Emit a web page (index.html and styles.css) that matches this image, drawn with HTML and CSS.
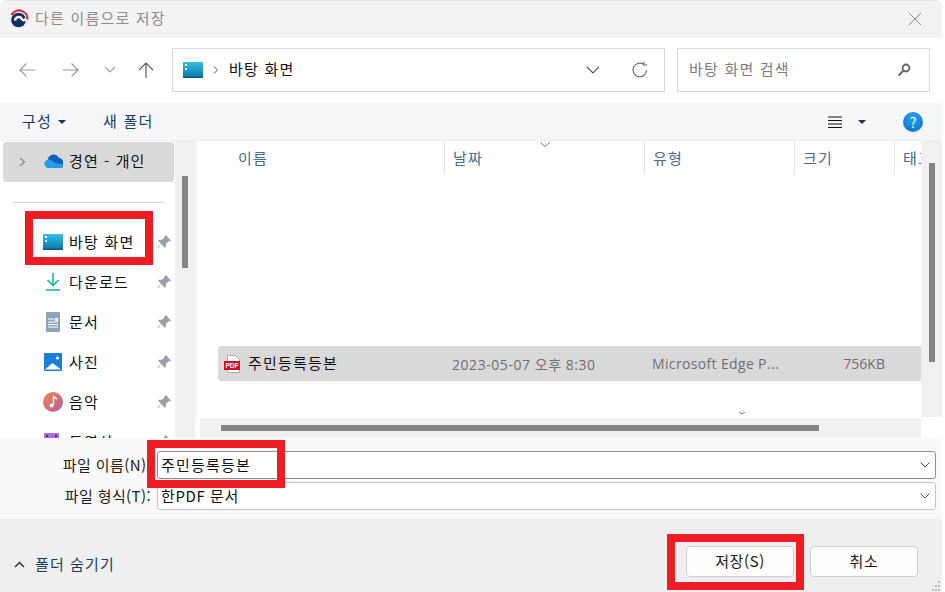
FILE: index.html
```html
<!DOCTYPE html>
<html lang="ko">
<head>
<meta charset="utf-8">
<title>다른 이름으로 저장</title>
<link rel="stylesheet" href="styles.css">
</head>
<body>
<div class="window">
  <header class="titlebar">
    <svg class="logo" width="20" height="20" viewBox="0 0 20 20"><circle cx="10" cy="10" r="10" fill="#eceef2"/><path d="M2.500 6A8.500 8.500 0 0 1 18.500 10.500" stroke="#d2283c" stroke-width="2.200" fill="none"/><circle cx="9.500" cy="11" r="7.300" fill="#12305f"/><path d="M6 11.500C6.500 7.500 11 7 12.500 9.500S15.500 12 16.500 9.500" stroke="#fff" stroke-width="2.400" fill="none"/></svg>
    <span class="title">다른 이름으로 저장</span>
    <svg class="close" width="14" height="14" viewBox="0 0 14 14"><path d="M1 1l12 12M13 1L1 13" stroke="#8a8a8a" fill="none"/></svg>
  </header>

  <nav class="navbar">
    <svg class="nav-back" width="16" height="16" viewBox="0 0 16 16"><path d="M16 8H1M7.500 1.500L1 8l6.500 6.500" stroke="#9a9a9a" stroke-width="1.200" fill="none"/></svg>
    <svg class="nav-fwd" width="16" height="16" viewBox="0 0 16 16"><path d="M0 8h15M8.500 1.500L15 8l-6.500 6.500" stroke="#9a9a9a" stroke-width="1.200" fill="none"/></svg>
    <svg class="nav-down" width="12" height="8" viewBox="0 0 12 8"><path d="M1 1l5 5 5-5" stroke="#a5a5a5" stroke-width="1.200" fill="none"/></svg>
    <svg class="nav-up" width="16" height="16" viewBox="0 0 16 16"><path d="M8 16V1M1 8l7-7 7 7" stroke="#5f5f5f" stroke-width="1.200" fill="none"/></svg>
    <div class="address">
      <svg width="20" height="16" viewBox="0 0 20 16"><use href="#desk"/></svg>
      <svg class="crumb" width="6" height="8" viewBox="0 0 6 8"><path d="M1 .5L4.500 4 1 7.500" stroke="#555" fill="none"/></svg>
      <span class="lift-2">바탕 화면</span>
      <svg class="addr-chev" width="14" height="8" viewBox="0 0 14 8"><path d="M1 1l6 6 6-6" stroke="#555" stroke-width="1.100" fill="none"/></svg>
      <svg class="refresh" width="18" height="18" viewBox="0 0 18 18"><path d="M15.500 9A6.800 6.800 0 1 1 12.500 3.300M12.800 .5v3.500H16.300" stroke="#6a6a6a" stroke-width="1.100" fill="none"/></svg>
    </div>
    <div class="search">
      <span class="lift-2">바탕 화면 검색</span>
      <svg width="14" height="14" viewBox="0 0 14 14"><circle cx="9" cy="5" r="3.500" fill="none" stroke="#666" stroke-width="1.800"/><path d="M6.500 7.500L1.500 12.500" stroke="#666" stroke-width="2"/></svg>
    </div>
  </nav>

  <div class="toolbar">
    <span class="tool-label lift">구성</span>
    <i class="caret"></i>
    <span class="tool-label new-folder lift">새 폴더</span>
    <div class="tool-right">
      <svg class="view" width="14" height="12" viewBox="0 0 14 12"><path d="M0 1h14M0 4.500h14M0 8h14M0 11.500h14" stroke="#111" fill="none"/></svg>
      <i class="caret"></i>
      <span class="help">?</span>
    </div>
  </div>

  <main class="main">
    <aside class="sidebar">
      <div class="side-item onedrive">
        <svg class="expander" width="7" height="10" viewBox="0 0 7 10"><path d="M1 1l4.500 4L1 9" stroke="#8a8a8a" stroke-width="1.200" fill="none"/></svg>
        <svg class="side-icon" width="20" height="14" viewBox="0 0 20 14"><path d="M5 6a5.500 5.500 0 0 1 10.500-2.200A4.500 4.500 0 0 1 19.800 10H5z" fill="#0b62b8"/><path d="M5 5.500A4.500 4.500 0 0 0 4 14h13.500a2.500 2.500 0 0 0 2.300-4.200L13 9.500 8.500 6.500A4.500 4.500 0 0 0 5 5.500z" fill="#2a9be8"/></svg>
        <span>경연 - 개인</span>
      </div>
      <div class="side-divider"></div>
      <div class="side-item">
        <svg class="side-icon" width="20" height="16" viewBox="0 0 20 16"><use href="#desk"/></svg>
        <span>바탕 화면</span>
        <svg class="pin" width="14" height="14"><use href="#pin"/></svg>
      </div>
      <div class="side-item">
        <svg class="side-icon" width="20" height="20" viewBox="0 0 20 20"><path d="M10 1v12M4.500 8l5.500 5.500L15.500 8" stroke="#1fb89a" stroke-width="1.600" fill="none"/><path d="M3 18h14" stroke="#1fb89a" stroke-width="1.600"/></svg>
        <span>다운로드</span>
        <svg class="pin" width="14" height="14"><use href="#pin"/></svg>
      </div>
      <div class="side-item">
        <svg class="side-icon" width="20" height="20" viewBox="0 0 20 20"><rect x="3" y="0" width="14" height="20" rx="1" fill="#8da3c0"/><path d="M5 7h6M5 10h10M5 12.500h10M5 15h10" stroke="#fff"/><rect x="12" y="6" width="3" height="3" fill="#fff"/></svg>
        <span>문서</span>
        <svg class="pin" width="14" height="14"><use href="#pin"/></svg>
      </div>
      <div class="side-item">
        <svg class="side-icon" width="20" height="18" viewBox="0 0 20 18"><rect x="1" y="0" width="18" height="18" rx="1" fill="#1a7fd8"/><circle cx="14.500" cy="5" r="1.500" fill="#fff"/><path d="M2 16.500l7.500-6.500 8.500 6.500z" fill="#fff"/></svg>
        <span>사진</span>
        <svg class="pin" width="14" height="14"><use href="#pin"/></svg>
      </div>
      <div class="side-item">
        <svg class="side-icon" width="20" height="20" viewBox="0 0 20 20"><defs><linearGradient id="mus" x1="0" y1="0" x2="1" y2="1"><stop offset="0" stop-color="#ee8a4a"/><stop offset="1" stop-color="#b65aa5"/></linearGradient></defs><circle cx="10" cy="10" r="10" fill="url(#mus)"/><path d="M10.500 4v9" stroke="#fff" stroke-width="1.400"/><path d="M10.500 4.500c1 1.500 3 1 3 3" stroke="#fff" stroke-width="1.400" fill="none"/><circle cx="8.500" cy="13.500" r="2" fill="#fff"/></svg>
        <span>음악</span>
        <svg class="pin" width="14" height="14"><use href="#pin"/></svg>
      </div>
      <div class="side-item">
        <svg class="side-icon" width="20" height="18" viewBox="0 0 20 18"><rect x="1" y="0" width="15" height="18" rx="1" fill="#a96be0"/><rect x="3" y="2" width="2" height="2" fill="#4a2a80"/><rect x="12" y="2" width="2" height="2" fill="#4a2a80"/></svg>
        <span>동영상</span>
        <svg class="pin" width="14" height="14"><use href="#pin"/></svg>
      </div>
    </aside>
    <div class="side-scroll"><div class="side-thumb"></div></div>

    <section class="list">
      <div class="columns">
        <div class="col col-name">이름</div>
        <div class="col col-date">날짜</div>
        <div class="col col-type">유형</div>
        <div class="col col-size">크기</div>
        <div class="col col-tag">태그</div>
        <svg class="sort" width="10" height="5" viewBox="0 0 10 5"><path d="M.5.500L5 4.500 9.500.5" stroke="#777" fill="none"/></svg>
      </div>
      <div class="row">
        <svg class="pdf" width="18" height="18" viewBox="0 0 18 18"><path d="M3.500.5h8l4 4v13h-12z" fill="#fff" stroke="#aaa"/><rect x="0" y="6" width="16" height="9" fill="#d40f1a"/><text x="1.500" y="12.800" class="pdf-text">PDF</text></svg>
        <span class="file-name lift">주민등록등본</span>
        <span class="file-date">2023-05-07 오후 8:30</span>
        <span class="file-type">Microsoft Edge P...</span>
        <span class="file-size">756KB</span>
      </div>
      <svg class="stray" width="8" height="3" viewBox="0 0 8 3"><path d="M1 0l3 2 3-2" stroke="#777" fill="none"/></svg>
    </section>
    <div class="v-scroll"><div class="v-thumb"></div></div>
    <div class="h-scroll"><div class="h-thumb"></div></div>
  </main>

  <section class="fields">
    <div class="field-row">
      <label class="field-label lift">파일 이름(N):</label>
      <div class="field active"><span class="lift">주민등록등본</span><svg width="10" height="6" viewBox="0 0 10 6"><path d="M.5.500L5 5 9.500.5" stroke="#555" fill="none"/></svg></div>
    </div>
    <div class="field-row">
      <label class="field-label lift">파일 형식(T):</label>
      <div class="field"><span class="lift type-value">한PDF 문서</span><svg width="10" height="6" viewBox="0 0 10 6"><path d="M.5.500L5 5 9.500.5" stroke="#555" fill="none"/></svg></div>
    </div>
  </section>

  <footer class="footer">
    <svg class="hide-chev" width="11" height="7" viewBox="0 0 11 7"><path d="M1 6l4.500-4.500L10 6" stroke="#333" stroke-width="1.500" fill="none"/></svg>
    <span class="hide-label">폴더 숨기기</span>
    <button class="btn save-btn">저장(S)</button>
    <button class="btn">취소</button>
    <svg class="grip" width="12" height="12" viewBox="0 0 12 12"><path d="M8 1h2v2H8zM5 5h2v2H5zM8 5h2v2H8zM2 9h2v2H2zM5 9h2v2H5zM8 9h2v2H8z" fill="#bbb"/></svg>
  </footer>

  <div class="mark mark-desktop"></div>
  <div class="mark mark-name"></div>
  <div class="mark mark-save"></div>
</div>

<svg class="defs" width="0" height="0">
  <defs>
    <linearGradient id="dg" x1="0" y1="0" x2="0" y2="1"><stop offset="0" stop-color="#2fc0e0"/><stop offset="1" stop-color="#0f73a8"/></linearGradient>
    <symbol id="desk" viewBox="0 0 20 16"><rect x="0" y="0" width="20" height="16" rx="1" fill="url(#dg)"/><rect x="2" y="2" width="2" height="2" fill="#fff"/><rect x="2" y="6" width="2" height="2" fill="#d8f4fb"/><path d="M0 14.500h20V15a1 1 0 0 1-1 1H1a1 1 0 0 1-1-1z" fill="#0a5680"/></symbol>
    <symbol id="pin" viewBox="0 0 14 14"><path d="M8.500 0L14 5.500l-1.500 1-1-.2-2.500 2.500v3l-1 1L4 9 1 13l-.5-.5L4 8.500 1 5.800l1-1h3L7.500 2.300 7.400 1.500z" fill="#98a1aa"/></symbol>
  </defs>
</svg>
</body>
</html>
```

FILE: styles.css
```css
* { box-sizing: border-box; }
html, body { margin: 0; padding: 0; background: #fff; }
body { width: 945px; height: 592px; overflow: hidden; font-family: "Noto Sans CJK KR", "Noto Sans", sans-serif; font-size: 15px; letter-spacing: 1.2px; color: #111; }
.defs { position: absolute; }
.window { position: relative; width: 942px; height: 592px; overflow: hidden; display: flex; flex-direction: column; }
.lift { position: relative; top: -1px; }
.lift-2 { position: relative; top: -2px; }

.titlebar { height: 38px; flex: none; background: #f3f3f3; border-top: 1px solid #e4e4e4; border-radius: 8px 8px 0 0; display: flex; align-items: center; padding: 0 20px 2px 9px; }
.logo { flex: none; }
.title { margin-left: 6px; color: #8c8c8c; position: relative; top: -1px; }
.close { margin-left: auto; }

.navbar { height: 65px; flex: none; background: #fff; display: flex; align-items: center; padding: 0 12px 1px 19px; }
.nav-fwd { margin-left: 28px; }
.nav-down { margin-left: 25px; }
.nav-up { margin-left: 22px; }
.address { margin-left: 18px; width: 493px; height: 44px; border: 1px solid #d9d9d9; display: flex; align-items: center; padding: 0 15px 0 10px; }
.crumb { margin: 0 10px 0 10px; }
.addr-chev { margin-left: auto; }
.refresh { margin-left: 31px; }
.search { margin-left: 12px; width: 253px; height: 44px; border: 1px solid #d9d9d9; display: flex; align-items: center; justify-content: space-between; padding: 0 18px 0 11px; color: #7c7c7c; }

.toolbar { height: 38px; flex: none; background: #f5f6f7; border-bottom: 1px solid #eeeeee; display: flex; align-items: center; padding: 0 19px 0 22px; }
.tool-label { color: #1d3a5c; }
.caret { display: inline-block; width: 0; height: 0; border: 4px solid transparent; border-top: 4px solid #1d3557; border-bottom: 0; margin-left: 6px; }
.new-folder { margin-left: 37px; }
.tool-right { margin-left: auto; display: flex; align-items: center; }
.tool-right .caret { margin-left: 16px; }
.help { width: 20px; height: 20px; margin-left: 37px; border-radius: 50%; background: radial-gradient(circle at 50% 30%, #2a9df0, #0a6fc8); color: #fff; font-size: 14px; letter-spacing: 0; line-height: 20px; text-align: center; }

.main { position: relative; height: 297px; flex: none; display: grid; grid-template-columns: 175px 20px 726px 21px; grid-template-rows: 276px 21px; background: #fff; }
.sidebar { grid-row: 1 / 3; overflow: hidden; padding-top: 1px; }
.side-item { display: flex; align-items: center; height: 40px; padding-left: 43px; position: relative; }
.side-item span { color: #111; margin-left: 26px; position: relative; top: -1px; }
.side-icon { position: absolute; left: 43px; top: 50%; transform: translateY(-50%); }
.onedrive { margin-left: 3px; width: 171px; background: #d9d9d9; border-radius: 3px; padding-left: 40px; }
.onedrive span { top: -2px; letter-spacing: 1.100px; }
.onedrive .side-icon { left: 40px; margin-top: -1px; }
.expander { position: absolute; left: 16px; top: 15px; }
.side-divider { height: 1px; margin: 20px 11px 19px 13px; background: #d9d9d9; }
.pin { position: absolute; left: 157px; top: 13px; }

.side-scroll { grid-row: 1 / 3; background: #f0f0f0; padding: 35px 7px 0; }
.side-thumb { width: 6px; height: 92px; background: #858585; }

.list { position: relative; overflow: hidden; background: #fff; border-left: 2px solid #f4f4f4; }
.columns { height: 33px; display: flex; position: relative; }
.col { height: 33px; padding: 6px 0 0 8px; border-right: 1px solid #e5e5e5; color: #4a6a8c; flex: none; }
.col-name { width: 248px; padding-left: 41px; }
.col-date { width: 200px; }
.col-type { width: 150px; }
.col-size { width: 100px; }
.col-tag { border-right: 0; white-space: nowrap; }
.sort { position: absolute; left: 343px; top: 1px; }
.row { position: relative; margin: 172px 0 0 21px; height: 35px; background: #d9d9d9; border-radius: 3px 0 0 3px; display: flex; align-items: center; padding-left: 6px; }
.pdf { flex: none; }
.pdf-text { font-family: "Liberation Sans", sans-serif; font-size: 6.500px; font-weight: 700; letter-spacing: 0; fill: #fff; }
.file-name { margin-left: 6px; width: 204px; flex: none; color: #111; }
.file-date { width: 200px; flex: none; color: #6f6f6f; font-size: 14px; font-family: "Open Sans", "Noto Sans CJK KR", sans-serif; letter-spacing: .55px; }
.file-type { width: 150px; flex: none; color: #6f6f6f; font-size: 14px; font-family: "Open Sans", sans-serif; letter-spacing: .35px; }
.file-size { width: 83px; flex: none; text-align: right; color: #6f6f6f; font-size: 14px; letter-spacing: 0; font-family: "Open Sans", sans-serif; }
.stray { position: absolute; left: 541px; top: 271px; }

.v-scroll { background: #f0f0f0; padding: 22px 8px 0; }
.v-thumb { width: 6px; height: 199px; background: #858585; }
.h-scroll { grid-column: 3; grid-row: 2; margin: 1px 0 0 5px; background: #f0f0f0; padding: 7px 0 0 21px; }
.h-thumb { width: 598px; height: 6px; background: #858585; }

.fields { height: 81px; flex: none; background: #f9f9f9; padding: 13px 6px 0 0; display: flex; flex-direction: column; gap: 3px; }
.field-row { display: flex; align-items: center; height: 28px; }
.field-label { width: 152px; text-align: right; padding-right: 1px; flex: none; color: #222; white-space: nowrap; letter-spacing: .4px; }
.field { margin-left: 5px; width: 779px; height: 28px; background: #fff; border: 1px solid #c6c6c6; border-radius: 3px; display: flex; align-items: center; justify-content: space-between; padding: 0 5px 0 3px; }
.field.active { border-color: #8f8f8f; }
.type-value { letter-spacing: .6px; }

.footer { height: 73px; flex: none; background: #efefef; display: flex; align-items: center; padding: 12px 24px 0 14px; position: relative; }
.hide-chev { margin-top: 6px; }
.hide-label { margin: 3px 0 0 10px; color: #1d3a5c; letter-spacing: 1.100px; }
.btn { width: 108px; height: 31px; padding: 0 0 2px; background: #fdfdfd; border: 1px solid #cfcfcf; border-radius: 4px; font: inherit; letter-spacing: .6px; color: #1a1a1a; }
.save-btn { margin-left: auto; margin-right: 16px; }
.grip { position: absolute; right: 0; bottom: 0; }

.mark { position: absolute; border: 8px solid #ee1c25; pointer-events: none; }
.mark-desktop { left: 25px; top: 211px; width: 128px; height: 54px; }
.mark-name { left: 147px; top: 440px; width: 138px; height: 48px; }
.mark-save { left: 667px; top: 534px; width: 137px; height: 56px; }
```
